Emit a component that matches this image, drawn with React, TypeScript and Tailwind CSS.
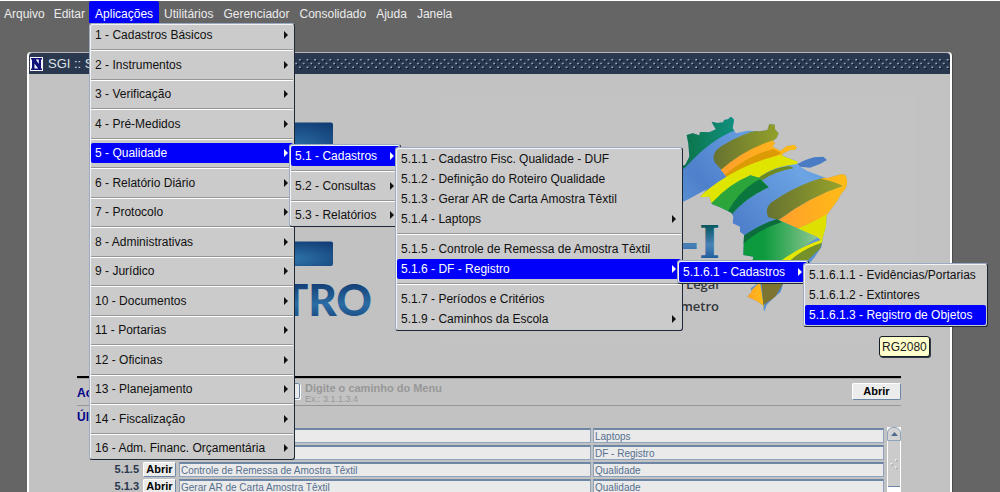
import React from "react";

type Item = {
  label: string;
  arrow?: boolean;
  rule?: boolean;
  sub?: Item[];
  tip?: string;
};

const registro: Item[] = [
  { label: "5.1.6.1.1 - Evidências/Portarias" },
  { label: "5.1.6.1.2 - Extintores" },
  { label: "5.1.6.1.3 - Registro de Objetos", tip: "RG2080" },
];

const cadastros: Item[] = [
  { label: "5.1.1 - Cadastro Fisc. Qualidade - DUF" },
  { label: "5.1.2 - Definição do Roteiro Qualidade" },
  { label: "5.1.3 - Gerar AR de Carta Amostra Têxtil" },
  { label: "5.1.4 - Laptops", arrow: true },
  { label: "5.1.5 - Controle de Remessa de Amostra Têxtil", rule: true },
  {
    label: "5.1.6 - DF - Registro",
    arrow: true,
    sub: [{ label: "5.1.6.1 - Cadastros", arrow: true, sub: registro }],
  },
  { label: "5.1.7 - Períodos e Critérios", rule: true },
  { label: "5.1.9 - Caminhos da Escola", arrow: true },
];

const qualidade: Item[] = [
  { label: "5.1 - Cadastros", arrow: true, sub: cadastros },
  { label: "5.2 - Consultas", arrow: true, rule: true },
  { label: "5.3 - Relatórios", arrow: true, rule: true },
];

const aplicacoes: Item[] = [
  { label: "1 - Cadastros Básicos", arrow: true },
  { label: "2 - Instrumentos", arrow: true, rule: true },
  { label: "3 - Verificação", arrow: true, rule: true },
  { label: "4 - Pré-Medidos", arrow: true, rule: true },
  { label: "5 - Qualidade", arrow: true, rule: true, sub: qualidade },
  { label: "6 - Relatório Diário", arrow: true, rule: true },
  { label: "7 - Protocolo", arrow: true, rule: true },
  { label: "8 - Administrativas", arrow: true, rule: true },
  { label: "9 - Jurídico", arrow: true, rule: true },
  { label: "10 - Documentos", arrow: true, rule: true },
  { label: "11 - Portarias", arrow: true, rule: true },
  { label: "12 - Oficinas", arrow: true, rule: true },
  { label: "13 - Planejamento", arrow: true, rule: true },
  { label: "14 - Fiscalização", arrow: true, rule: true },
  { label: "16 - Adm. Financ. Orçamentária", arrow: true, rule: true },
];

const menuWidths = ["w-[206px]", "w-[112px]", "w-[288px]", "w-[132px]", "w-[185px]"];

function Menu({ items, level, place }: { items: Item[]; level: number; place: string }) {
  return (
    <ul
      role="menu"
      className={`absolute z-10 rounded-[3px] border border-t-[#9aabc2] border-l-[#9aabc2] border-r-[#1c2836] border-b-[#1c2836] bg-[#cbcbcb] p-px shadow-[inset_1px_1px_0_#f2f2f2] ${menuWidths[level]} ${place}`}
    >
      {items.map((item, i) => {
        const active = Boolean(item.sub || item.tip);
        return (
          <React.Fragment key={item.label}>
            {item.rule && (
              <li
                role="separator"
                className={`flex items-center ${i % 2 || level === 2 ? "h-[10px]" : "h-[9px]"}`}
              >
                <span className="h-[2px] w-full border-t border-b border-t-[#969696] border-b-white" />
              </li>
            )}
            <li className="relative" role="none">
              <button
                type="button"
                role="menuitem"
                className={`flex h-5 w-full items-center justify-between rounded-[2px] pr-[5px] pl-1 whitespace-nowrap ${
                  active ? "bg-[#0000fb] text-white" : "text-[#101010]"
                }`}
              >
                {item.label}
                {item.arrow && (
                  <svg width="4" height="8" viewBox="0 0 4 8" fill="currentColor" aria-hidden="true">
                    <path d="M0 0 4 4 0 8Z" />
                  </svg>
                )}
              </button>
              {item.sub && <Menu items={item.sub} level={level + 1} place="left-full -ml-1 top-px" />}
              {item.tip && (
                <span
                  role="tooltip"
                  className="absolute top-[31px] left-[74px] flex h-[21px] items-center rounded-[3px] border border-[#141c26] bg-[#ffffcc] px-[2px] text-[#202020] shadow-[1px_1px_0_#303840]"
                >
                  {item.tip}
                </span>
              )}
            </li>
          </React.Fragment>
        );
      })}
    </ul>
  );
}

function MenuBar() {
  const names = ["Arquivo", "Editar", "Aplicações", "Utilitários", "Gerenciador", "Consolidado", "Ajuda", "Janela"];
  return (
    <nav className="relative z-20 flex h-[23px] shrink-0 border-t border-white text-[#ececec]">
      {names.map((name, i) => (
        <div key={name} className="relative">
          <button
            type="button"
            className={`h-full rounded-t-[2px] pt-1 ${
              name === "Aplicações" ? "bg-[#0000fb] px-1.5 text-white" : i < 2 ? "px-1" : "px-[5px]"
            } ${i === 1 ? "pl-[5px]" : ""}`}
          >
            {name}
          </button>
          {name === "Aplicações" && <Menu items={aplicacoes} level={0} place="top-full left-0" />}
        </div>
      ))}
    </nav>
  );
}

function TitleBar() {
  return (
    <header className="flex h-[22px] items-center rounded-t-[4px] border-t border-[#b4b8bc] bg-[#29384e] text-[13px] text-[#dfe3e8]">
      <svg className="ml-px shrink-0" width="13" height="14" viewBox="0 0 13 14" aria-hidden="true">
        <rect width="13" height="14" fill="#f4f4fa" />
        <path d="M1 1h11v1.500H1zM1 11.500h11V13H1zM2 2H5.500L8.800 7V2H11v10H8.500L4.500 6.500V12H2z" fill="#10107c" />
      </svg>
      <h1 className="ml-[5px] whitespace-nowrap">SGI :: SGI</h1>
      <svg className="ml-2 h-3 min-w-0 flex-1" aria-hidden="true">
        <defs>
          <pattern id="grip" width="7.620" height="12" patternUnits="userSpaceOnUse">
            <path d="M2.500 2h1.500v1.500H2.500zM6.300 5.700h1.500v1.500H6.300zM2.500 9.400h1.500v1.500H2.500z" fill="#060c14" />
            <path d="M1.300 1h1.500v1.500H1.300zM5.100 4.700h1.500v1.500H5.100zM1.300 8.400h1.500v1.500H1.300z" fill="#a9bfd2" />
          </pattern>
        </defs>
        <rect width="100%" height="12" fill="url(#grip)" />
      </svg>
    </header>
  );
}

function InmetroLogo() {
  return (
    <svg className="shrink-0" width="300" height="230" viewBox="80 110 300 230" aria-label="INMETRO" role="img">
      <defs>
        <radialGradient id="tile" cx="0.5" cy="0.7" r="0.8">
          <stop offset="0" stopColor="#2f74ac" />
          <stop offset="1" stopColor="#113d74" />
        </radialGradient>
        <linearGradient id="word" x1="0" y1="0" x2="0" y2="1">
          <stop offset="0.200" stopColor="#123f76" />
          <stop offset="0.600" stopColor="#2c6ca4" />
          <stop offset="1" stopColor="#123f76" />
        </linearGradient>
      </defs>
      <rect x="250" y="122.500" width="86" height="40" rx="2" fill="url(#tile)" />
      <rect x="250" y="241.500" width="86" height="24.500" rx="2" fill="url(#tile)" />
      <text x="375" y="316" textAnchor="end" fontFamily="Lato, sans-serif" fontWeight="900" fontSize="44" fill="url(#word)">
        TRO
      </text>
    </svg>
  );
}

function NetworkLogo() {
  return (
    <svg className="shrink-0" width="475" height="248" viewBox="440 94 475 248" aria-label="RBMLQ-I" role="img">
      <defs>
        <clipPath id="land">
          <path d="M60 310V200L76 194 88 170 85 130 80 105 98 100 118 106 120 96 148 97 168 88 160 76 155 65 172 69 190 67 192 60 204 58 212 50 218 54 222 60 218 85 228 100 262 92 300 94 322 90 328 72 345 74 345 88 356 100 350 114 338 124 346 128 338 140 362 152 380 138 403 134 411 142 405 150 392 150 370 160 366 166 412 184 414 196 440 212 500 235 545 222Q564 222 561 252 560 265 545 280L530 306 500 345 498 380 488 415 485 440 465 470 440 500 370 550 362 575 345 590 328 606 320 615 313 635 308 615 290 603 262 590 275 575 272 565 300 545 275 495 280 470 250 465 252 405 240 395 240 380 218 370 220 350 214 338 180 322 155 312 148 290 120 292 140 268 85 298Z" />
        </clipPath>
        <linearGradient id="sky" x1="0" y1="1" x2="1" y2="0">
          <stop offset="0" stopColor="#6fb4e2" />
          <stop offset="0.400" stopColor="#4e80cb" />
          <stop offset="0.700" stopColor="#6ca4e4" />
          <stop offset="1" stopColor="#4e80cb" />
        </linearGradient>
        <linearGradient id="forest">
          <stop offset="0" stopColor="#0b7040" />
          <stop offset="1" stopColor="#109080" />
        </linearGradient>
        <linearGradient id="olive">
          <stop offset="0" stopColor="#677230" />
          <stop offset="1" stopColor="#97a42a" />
        </linearGradient>
        <linearGradient id="field">
          <stop offset="0.300" stopColor="#0c9a3c" />
          <stop offset="1" stopColor="#90c894" />
        </linearGradient>
        <linearGradient id="sun">
          <stop offset="0" stopColor="#ff9e2c" />
          <stop offset="1" stopColor="#ffbe14" />
        </linearGradient>
        <linearGradient id="initial" x1="0" y1="0" x2="0" y2="1">
          <stop offset="0.200" stopColor="#0a5a66" />
          <stop offset="0.550" stopColor="#4a82b8" />
          <stop offset="0.900" stopColor="#0b4f90" />
        </linearGradient>
      </defs>
      <rect x="440" y="94" width="475" height="248" fill="#c3c3c3" />
      <g transform="translate(660 100) scale(0.33333)">
        <g clipPath="url(#land)">
          <rect x="50" y="30" width="530" height="620" fill="url(#sky)" />
          <path d="M50 30H226L222 92Q150 120 78 200L50 220Z" fill="url(#forest)" />
          <path d="M165 188Q150 160 185 138 250 98 310 88L322 60 370 60 356 118Q250 148 185 210Z" fill="url(#olive)" />
          <path d="M182 210Q250 150 335 122L370 118 420 125 412 152 372 166 215 245 196 226Z" fill="url(#sun)" />
          <path d="M195 225Q260 168 340 147L364 160Q290 190 222 243L208 242Z" fill="#dc9a05" />
          <path d="M100 305Q220 195 362 165L416 185 412 192Q340 198 296 234L270 226 150 312Z" fill="#e0e500" />
          <path d="M296 234Q336 203 388 198L402 204Q345 214 306 241Z" fill="#6d8a20" />
          <path d="M150 320 158 306Q210 250 272 226L300 234 326 262Q260 290 216 342Z" fill="#2ca63a" />
          <path d="M204 334Q232 280 284 246L300 238 326 262Q260 290 216 342Z" fill="#0a783e" />
          <path d="M325 352Q310 320 345 300 430 245 500 232L550 258Q450 290 356 360Z" fill="url(#olive)" />
          <path d="M484 236 570 205 572 290 500 348 415 386 356 360Q450 290 548 258Q524 244 484 236Z" fill="url(#sun)" />
          <path d="M412 386Q460 368 505 340L502 400 488 425 472 412Z" fill="#dde000" />
          <path d="M240 425Q300 375 350 358L474 412Q430 440 376 480H240Z" fill="url(#field)" />
          <path d="M240 440V415Q300 372 350 358L366 366Q300 385 240 440Z" fill="#0c6c3c" />
          <path d="M366 480Q430 435 490 418L484 430Q430 450 394 482Z" fill="#e4e800" />
          <path d="M390 482Q430 445 486 428L480 446 440 484Z" fill="#76902a" />
          <path d="M250 595 300 545 312 622Z" fill="url(#sun)" />
          <path d="M304 540H375L345 592 310 615Z" fill="#7c7430" />
        </g>
        <path d="M412 192 436 180 462 172 490 170 501 180 480 192 450 203 420 200Z" fill="#4a7cc6" />
      </g>
      <text x="720" y="258" textAnchor="end" fontFamily="'DejaVu Serif', serif" fontWeight="700" fontSize="45" fill="url(#initial)">
        -I
      </text>
      <g fontFamily="'Open Sans', sans-serif" fontWeight="600" fontSize="13" fill="#33363a" textAnchor="end">
        <text x="719" y="289">Legal</text>
        <text x="719" y="311">metro</text>
      </g>
    </svg>
  );
}

function OpenButton({ className }: { className: string }) {
  return (
    <button
      type="button"
      className={`rounded-[2px] border border-t-white border-l-white border-r-[#6c86a8] border-b-[#6c86a8] bg-[#ececec] font-bold text-black ${className}`}
    >
      Abrir
    </button>
  );
}

const rows = [
  { path: "", name: "", group: "Laptops" },
  { path: "", name: "", group: "DF - Registro" },
  { path: "5.1.5", name: "Controle de Remessa de Amostra Têxtil", group: "Qualidade" },
  { path: "5.1.3", name: "Gerar AR de Carta Amostra Têxtil", group: "Qualidade" },
];

const cell =
  "block h-[15px] w-full overflow-hidden border border-t-2 border-[#8fa3bd] border-t-[#6f87a6] bg-[#eaeaea] pl-px text-[10px] leading-[13px] text-[#56708f]";

function RecentTable() {
  return (
    <div className="flex items-start gap-[3px]">
      <table className="min-w-0 flex-1 table-fixed border-collapse">
        <tbody>
          {rows.map((row) => (
            <tr key={row.path + row.group} className="h-[17px]">
              <th scope="row" className="w-[62px] p-0 text-right text-[11px] leading-[15px] font-bold text-[#29384e]">
                {row.path}
              </th>
              <td className="w-[38px] p-0 pl-1">
                {row.path && <OpenButton className="block h-[15px] w-[33px] text-[11px] leading-[13px]" />}
              </td>
              <td className="p-0 pl-[2px]">
                <span className={cell}>{row.name}</span>
              </td>
              <td className="w-[293px] p-0 pl-[2px]">
                <span className={cell}>{row.group}</span>
              </td>
            </tr>
          ))}
        </tbody>
      </table>
      <div className="flex h-20 w-[14px] flex-col bg-white">
        <button
          type="button"
          aria-label="Rolar para cima"
          className="flex h-[14px] items-center justify-center rounded-t-[6px] border border-[#8fa3bd] bg-[#d4d4d4]"
        >
          <svg width="7" height="4" viewBox="0 0 7 4" fill="#4f6a8c" aria-hidden="true">
            <path d="M3.500 0 7 4H0Z" />
          </svg>
        </button>
        <div className="mx-px flex h-[46px] items-center justify-center border-b border-[#6f87a6] bg-[#cbcbcb]">
          <svg width="8" height="12" viewBox="0 0 8 12" aria-hidden="true">
            <path d="M6 2h1.500v1.500H6zM1.500 6H3v1.500H1.500zM6 9.500h1.500V11H6z" fill="#98a2ae" />
            <path d="M5 1h1.500v1.500H5zM.5 5H2v1.500H.5zM5 8.500h1.500V10H5z" fill="#f4f4f4" />
          </svg>
        </div>
      </div>
    </div>
  );
}

export default function App() {
  return (
    <div className="flex h-screen flex-col overflow-hidden bg-[#656565] font-['Liberation_Sans',Arial,sans-serif] text-[12px] leading-4">
      <MenuBar />
      <main className="mt-[29px] mr-12 ml-[27px] flex min-h-0 flex-1 flex-col rounded-t-[4px] border-r-2 border-l-2 border-white bg-[#c2c2c2] shadow-[1px_1px_0_#4a4a4a]">
        <TitleBar />
        <div className="flex min-h-0 flex-1 flex-col overflow-hidden pr-[49px] pl-12">
          <section className="flex h-[302px] shrink-0 items-start pt-5">
            <div className="w-[363px] shrink-0 pt-4">
              <InmetroLogo />
            </div>
            <NetworkLogo />
          </section>
          <form className="flex h-[30px] shrink-0 items-start border-t-2 border-b border-t-black border-b-[#969696]">
            <div className="flex min-w-0 flex-1 items-start border-t border-[#a2a2a2] pt-1">
              <label htmlFor="path" className="w-[90px] pt-[2px] font-bold text-[#00008b]">
                Ac
              </label>
              <input
                id="path"
                type="text"
                className="h-4 w-[133px] rounded-[2px] border border-[#6f87a6] bg-[#eaeaea] px-1 shadow-[1px_1px_0_#ffffff]"
              />
              <p className="ml-[5px] flex-1 text-[11px] leading-[11px] font-bold text-[#989898]">
                Digite o caminho do Menu
                <small className="block text-[9px] leading-[11px] font-normal">Ex.: 3.1.1.3.4</small>
              </p>
              <OpenButton className="h-[17px] w-[49px] text-[11px] leading-[15px]" />
            </div>
          </form>
          <h2 className="h-[21px] shrink-0 pt-[3px] font-bold text-[#00008b]">Últ</h2>
          <RecentTable />
        </div>
      </main>
    </div>
  );
}
